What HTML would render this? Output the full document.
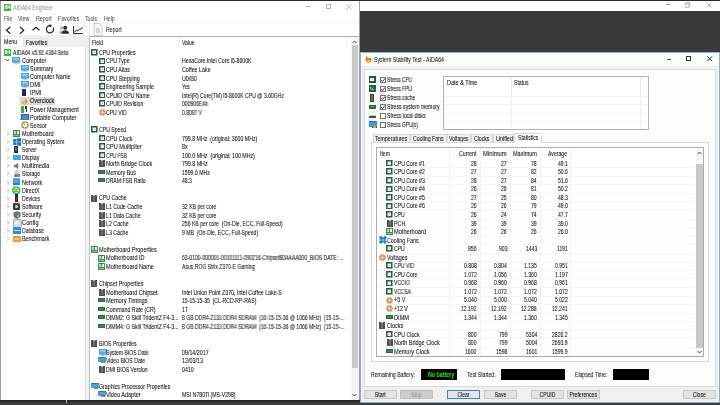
<!DOCTYPE html><html><head><meta charset="utf-8"><style>
*{margin:0;padding:0}
html,body{width:720px;height:405px;overflow:hidden;background:#2e2e2e;font-family:"Liberation Sans",sans-serif;position:relative}
.t{position:absolute;white-space:nowrap;line-height:8px;height:8px;transform:scaleY(1.3);transform-origin:0 3.4px;will-change:transform;-webkit-text-stroke:0.06px currentColor}
</style></head><body>
<div style="position:absolute;left:0px;top:0px;width:720px;height:1px;background:#2a2a2a"></div>
<div style="position:absolute;left:0px;top:400px;width:720px;height:5px;background:#3a3a3a"></div>
<div style="position:absolute;left:0px;top:400px;width:720px;height:1.5px;background:#262626"></div>
<div style="position:absolute;left:65.5px;top:400px;width:1.6px;height:3px;background:#bdbdbd"></div>
<div style="position:absolute;left:0px;top:1px;width:360px;height:399px;background:#fff"></div>
<div style="position:absolute;left:0px;top:1px;width:1px;height:399px;background:#9c9c9c"></div>
<div style="position:absolute;left:359px;top:1px;width:1px;height:399px;background:#9a9a9a"></div>
<div style="position:absolute;left:4px;top:4px;width:7px;height:7px;background:#3cb83c"></div><div style="position:absolute;left:4px;top:4px;width:7px;height:7px;color:#fff;font-size:5.6px;font-weight:bold;line-height:7.4px;text-align:center;letter-spacing:-0.3px">64</div>
<div class="t" style="left:13px;top:3.10px;color:#9a9a9a;font-size:5.2px;">AIDA64 Engineer</div>
<div style="position:absolute;left:306px;top:6.4px;width:4.8px;height:0.7px;background:#b4b4b4"></div>
<div style="position:absolute;left:326px;top:4px;width:5px;height:5px;box-sizing:border-box;border:0.8px solid #b4b4b4"></div>
<svg style="position:absolute;left:346px;top:4px" width="6" height="6" viewBox="0 0 6 6"><path d="M0.3 0.3L5.7 5.7M5.7 0.3L0.3 5.7" stroke="#b4b4b4" stroke-width="0.8"/></svg>
<div class="t" style="left:4px;top:13.80px;color:#555;font-size:5.2px;">File</div>
<div class="t" style="left:18px;top:13.80px;color:#555;font-size:5.2px;">View</div>
<div class="t" style="left:36px;top:13.80px;color:#555;font-size:5.2px;">Report</div>
<div class="t" style="left:58px;top:13.80px;color:#555;font-size:5.2px;">Favorites</div>
<div class="t" style="left:85px;top:13.80px;color:#555;font-size:5.2px;">Tools</div>
<div class="t" style="left:104px;top:13.80px;color:#555;font-size:5.2px;">Help</div>
<div style="position:absolute;left:1px;top:22.5px;width:358px;height:0.5px;background:#f6f6f6"></div>
<svg style="position:absolute;left:0;top:22px" width="90" height="14" viewBox="0 0 90 14">
<path d="M10.3 5L6.5 8.3L10.3 11.7" fill="none" stroke="#222" stroke-width="1.2"/>
<path d="M20 5L23.8 8.3L20 11.7" fill="none" stroke="#222" stroke-width="1.2"/>
<path d="M32.5 8.3L36 5.2L39.5 8.3" fill="none" stroke="#222" stroke-width="1.2"/>
<path d="M53.1 5.5A3.6 3.6 0 1 1 50 3.7" fill="none" stroke="#222" stroke-width="1.15"/>
<path d="M49.6 2L52.2 3.7L49.6 5.4Z" fill="#222"/>
<circle cx="61.6" cy="5.9" r="1.6" fill="#b5b5b5"/>
<path d="M58.8 11.6Q59.2 8.6 62.5 8.3L61.5 11.6Z" fill="#b5b5b5"/>
<circle cx="65.2" cy="5.7" r="2" fill="#2a2a2a"/>
<path d="M61.3 11.7Q61.6 8.4 65.2 8.2Q68.8 8.4 69.1 11.7Z" fill="#2a2a2a"/>
<path d="M73.6 4.2V11.6H82.9" fill="none" stroke="#222" stroke-width="1"/>
<path d="M74.6 10.2L76.4 7.9L78 9.1L79.8 6.8L80.8 7.3L82.4 5" fill="none" stroke="#222" stroke-width="0.95"/>
</svg>
<div style="position:absolute;left:89px;top:22px;width:0.7px;height:13px;background:#e2e2e2"></div>
<svg style="position:absolute;left:93px;top:23px" width="10" height="13" viewBox="0 0 10 13"><path d="M1 0.5H6.5L9 3V12.5H1Z" fill="#f7f7f7" stroke="#b8b8b8" stroke-width="0.7"/><rect x="3" y="5" width="4" height="5" fill="#d4d4d4"/></svg>
<div class="t" style="left:106px;top:25.30px;color:#2a2a2a;font-size:5.2px;">Report</div>
<div style="position:absolute;left:1px;top:35.3px;width:88px;height:11.7px;background:#f0f0f0"></div>
<div style="position:absolute;left:1px;top:37px;width:22px;height:10.5px;background:#fff"></div>
<div class="t" style="left:4px;top:36.80px;color:#111;font-size:5.3px;">Menu</div>
<div style="position:absolute;left:23px;top:37.8px;width:25px;height:9.2px;background:#ececec;box-sizing:border-box;border:0.6px solid #e2e2e2;border-bottom:none"></div>
<div class="t" style="left:25.5px;top:37.80px;color:#111;font-size:5.2px;">Favorites</div>
<div style="position:absolute;left:1px;top:47px;width:85px;height:353px;background:#fff"></div>
<div style="position:absolute;left:85.4px;top:47px;width:0.6px;height:353px;background:#e4e4e4"></div>
<div style="position:absolute;left:86px;top:36px;width:3px;height:364px;background:#f0f0f0"></div>
<div style="position:absolute;left:89px;top:36px;width:270px;height:364px;background:#fff"></div>
<div style="position:absolute;left:88.6px;top:36px;width:0.8px;height:364px;background:#c0c0c0"></div>
<div style="position:absolute;left:89px;top:35.8px;width:270px;height:0.8px;background:#b0b0b0"></div>
<div style="position:absolute;left:3.6px;top:48.70px;width:7.4px;height:7.2px;background:#36b936"></div><div style="position:absolute;left:3.6px;top:48.70px;width:7.4px;height:7.2px;color:#fff;font-size:5.6px;font-weight:bold;line-height:7.6px;text-align:center;letter-spacing:-0.3px">64</div>
<div class="t" style="left:13px;top:47.80px;color:#141414;font-size:5.1px;transform:scale(0.9870,1.3);">AIDA64 v5.92.4364 Beta</div>
<svg style="position:absolute;left:5px;top:58.41px" width="5" height="4" viewBox="0 0 5 4"><path d="M0.5 1L2.5 3L4.5 1" fill="none" stroke="#333" stroke-width="0.9"/></svg>
<svg style="position:absolute;left:12.00px;top:57.01px" width="8" height="7.5" viewBox="0 0 8 7.5"><rect x="0.3" y="0.3" width="7.4" height="4.9" fill="#56b2ee" stroke="#2c84c6" stroke-width="0.6"/><rect x="1" y="1" width="6" height="1.6" fill="#8fd0f7"/><rect x="3.2" y="5.3" width="1.6" height="1" fill="#7a8a99"/><rect x="1.5" y="6.3" width="5" height="0.9" fill="#b9c6d2"/></svg>
<div class="t" style="left:22px;top:55.91px;color:#141414;font-size:5.1px;transform:scale(1.0883,1.3);">Computer</div>
<div style="position:absolute;left:20px;top:96.96px;width:35px;height:8px;background:#d9d9d9"></div>
<svg style="position:absolute;left:20.50px;top:65.12px" width="8" height="7.5" viewBox="0 0 8 7.5"><rect x="0.3" y="0.3" width="7.4" height="4.9" fill="#56b2ee" stroke="#2c84c6" stroke-width="0.6"/><rect x="1" y="1" width="6" height="1.6" fill="#8fd0f7"/><rect x="3.2" y="5.3" width="1.6" height="1" fill="#7a8a99"/><rect x="1.5" y="6.3" width="5" height="0.9" fill="#b9c6d2"/></svg>
<div class="t" style="left:30px;top:64.02px;color:#141414;font-size:5.1px;transform:scale(1.0713,1.3);">Summary</div>
<svg style="position:absolute;left:20.50px;top:73.23px" width="8" height="7.5" viewBox="0 0 8 7.5"><rect x="0.3" y="0.3" width="7.4" height="4.9" fill="#56b2ee" stroke="#2c84c6" stroke-width="0.6"/><rect x="1" y="1" width="6" height="1.6" fill="#8fd0f7"/><rect x="3.2" y="5.3" width="1.6" height="1" fill="#7a8a99"/><rect x="1.5" y="6.3" width="5" height="0.9" fill="#b9c6d2"/></svg>
<div class="t" style="left:30px;top:72.13px;color:#141414;font-size:5.1px;transform:scale(1.0863,1.3);">Computer Name</div>
<svg style="position:absolute;left:20.50px;top:81.34px" width="8" height="7.5" viewBox="0 0 8 7.5"><rect x="0.3" y="0.3" width="7.4" height="4.9" fill="#56b2ee" stroke="#2c84c6" stroke-width="0.6"/><rect x="1" y="1" width="6" height="1.6" fill="#8fd0f7"/><rect x="3.2" y="5.3" width="1.6" height="1" fill="#7a8a99"/><rect x="1.5" y="6.3" width="5" height="0.9" fill="#b9c6d2"/></svg>
<div class="t" style="left:30px;top:80.24px;color:#141414;font-size:5.1px;transform:scale(1.1344,1.3);">DMI</div>
<div style="position:absolute;left:22px;top:89.35px;width:3.5px;height:7px;background:#1d2a44;border-radius:0.6px"></div>
<div class="t" style="left:30px;top:88.35px;color:#141414;font-size:5.1px;transform:scale(1.0826,1.3);">IPMI</div>
<svg style="position:absolute;left:21px;top:96.96px" width="7" height="8" viewBox="0 0 7 8"><path d="M1 3L3 5.5L4.5 1.5L6.5 4.5L5 7.5H2Z" fill="#f28c1e"/><path d="M2.6 6.2L4.4 4.2L5 7.2Z" fill="#ffd24a"/></svg>
<div class="t" style="left:30px;top:96.46px;color:#141414;font-size:5.1px;transform:scale(1.0748,1.3);">Overclock</div>
<div style="position:absolute;left:20.5px;top:105.57px;width:3px;height:7px;background:#2fb34a"></div>
<div style="position:absolute;left:25px;top:105.86999999999999px;width:2px;height:3px;background:#333"></div>
<div style="position:absolute;left:25.7px;top:108.86999999999999px;width:0.7px;height:3px;background:#333"></div>
<div class="t" style="left:30px;top:104.57px;color:#141414;font-size:5.1px;transform:scale(1.0714,1.3);">Power Management</div>
<div style="position:absolute;left:21px;top:113.67999999999999px;width:6px;height:4.5px;background:#3f8fdd;border:0.5px solid #2a5f9a"></div>
<div style="position:absolute;left:20px;top:118.67999999999999px;width:8px;height:1.5px;background:#6a7a90"></div>
<div class="t" style="left:30px;top:112.68px;color:#141414;font-size:5.1px;transform:scale(1.0838,1.3);">Portable Computer</div>
<svg style="position:absolute;left:20.5px;top:121.49px" width="8" height="8" viewBox="0 0 8 8"><circle cx="4" cy="4" r="3.1" fill="#fff" stroke="#c98b3a" stroke-width="1.3"/><path d="M4 4L2.5 2" stroke="#2f9a3a" stroke-width="0.9"/><path d="M1.2 4.6A3 3 0 0 0 2.6 6.6" stroke="#2fb14a" stroke-width="1.2" fill="none"/></svg>
<div class="t" style="left:30px;top:120.79px;color:#141414;font-size:5.1px;transform:scale(1.0285,1.3);">Sensor</div>
<svg style="position:absolute;left:5.5px;top:130.89999999999998px" width="4" height="5" viewBox="0 0 4 5"><path d="M1 0.5L3 2.5L1 4.5" fill="none" stroke="#8a8a8a" stroke-width="0.7"/></svg>
<div style="position:absolute;left:12.5px;top:129.89999999999998px;width:7.5px;height:7px;background:#3c8f4c"></div>
<div style="position:absolute;left:13.5px;top:130.89999999999998px;width:2.4px;height:2.8px;background:#b8dcbf"></div>
<div style="position:absolute;left:16.6px;top:130.89999999999998px;width:2.4px;height:2.8px;background:#f4fbf5"></div>
<div style="position:absolute;left:13.5px;top:134.59999999999997px;width:5.5px;height:1.3px;background:#7fbf8a"></div>
<div class="t" style="left:22px;top:128.90px;color:#141414;font-size:5.1px;transform:scale(1.0938,1.3);">Motherboard</div>
<svg style="position:absolute;left:5.5px;top:139.01px" width="4" height="5" viewBox="0 0 4 5"><path d="M1 0.5L3 2.5L1 4.5" fill="none" stroke="#8a8a8a" stroke-width="0.7"/></svg>
<svg style="position:absolute;left:12.5px;top:137.91px" width="8" height="8" viewBox="0 0 8 8"><path d="M0 1.2L3.5 0.7V3.7H0ZM4 0.6L8 0V3.7H4ZM0 4.2H3.5V7.3L0 6.8ZM4 4.2H8V8L4 7.4Z" fill="#1577d6"/></svg>
<div class="t" style="left:22px;top:137.01px;color:#141414;font-size:5.1px;transform:scale(1.0385,1.3);">Operating System</div>
<svg style="position:absolute;left:5.5px;top:147.12px" width="4" height="5" viewBox="0 0 4 5"><path d="M1 0.5L3 2.5L1 4.5" fill="none" stroke="#8a8a8a" stroke-width="0.7"/></svg>
<div style="position:absolute;left:14.0px;top:145.82px;width:4px;height:7.6px;background:#1f2a3a;border-radius:0.5px"></div>
<div style="position:absolute;left:14.8px;top:146.82px;width:2.4px;height:4.5px;background:#4b6ea8"></div>
<div class="t" style="left:22px;top:145.12px;color:#141414;font-size:5.1px;transform:scale(0.9723,1.3);">Server</div>
<svg style="position:absolute;left:5.5px;top:155.23px" width="4" height="5" viewBox="0 0 4 5"><path d="M1 0.5L3 2.5L1 4.5" fill="none" stroke="#8a8a8a" stroke-width="0.7"/></svg>
<div style="position:absolute;left:12.5px;top:154.73px;width:8px;height:5.5px;background:#48a5ea"></div>
<div class="t" style="left:22px;top:153.23px;color:#141414;font-size:5.1px;transform:scale(1.0387,1.3);">Display</div>
<svg style="position:absolute;left:5.5px;top:163.33999999999997px" width="4" height="5" viewBox="0 0 4 5"><path d="M1 0.5L3 2.5L1 4.5" fill="none" stroke="#8a8a8a" stroke-width="0.7"/></svg>
<svg style="position:absolute;left:12.5px;top:161.83999999999997px" width="8" height="8" viewBox="0 0 8 8"><path d="M1 2.8H2.8L5 0.8V7.2L2.8 5.2H1Z" fill="#777"/><path d="M6 2.5V5.5" stroke="#aaa" stroke-width="0.7"/></svg>
<div class="t" style="left:22px;top:161.34px;color:#141414;font-size:5.1px;transform:scale(1.1100,1.3);">Multimedia</div>
<svg style="position:absolute;left:5.5px;top:171.45px" width="4" height="5" viewBox="0 0 4 5"><path d="M1 0.5L3 2.5L1 4.5" fill="none" stroke="#8a8a8a" stroke-width="0.7"/></svg>
<div style="position:absolute;left:13.5px;top:174.45px;width:6.5px;height:3px;background:#888;border-radius:0.5px"></div>
<div style="position:absolute;left:15.0px;top:170.45px;width:3.5px;height:4px;background:#cfcfcf;border-radius:50% 50% 0 0"></div>
<div class="t" style="left:22px;top:169.45px;color:#141414;font-size:5.1px;transform:scale(1.0144,1.3);">Storage</div>
<svg style="position:absolute;left:5.5px;top:179.56px" width="4" height="5" viewBox="0 0 4 5"><path d="M1 0.5L3 2.5L1 4.5" fill="none" stroke="#8a8a8a" stroke-width="0.7"/></svg>
<div style="position:absolute;left:13.0px;top:178.26px;width:7px;height:7.2px;background:#4aa3ea;border-radius:1px"></div>
<div style="position:absolute;left:13.0px;top:183.46px;width:7px;height:2px;background:#2e7fc8"></div>
<div class="t" style="left:22px;top:177.56px;color:#141414;font-size:5.1px;transform:scale(1.0890,1.3);">Network</div>
<svg style="position:absolute;left:5.5px;top:187.67000000000002px" width="4" height="5" viewBox="0 0 4 5"><path d="M1 0.5L3 2.5L1 4.5" fill="none" stroke="#8a8a8a" stroke-width="0.7"/></svg>
<svg style="position:absolute;left:12.0px;top:186.17000000000002px" width="8.5" height="8.5" viewBox="0 0 8.5 8.5"><circle cx="4.25" cy="4.25" r="3.4" fill="#fff" stroke="#2fb32f" stroke-width="1.4"/><path d="M2.3 2.6Q4.25 4.5 6.2 2.6M2.3 6.2Q4.25 4 6.2 6.2" fill="none" stroke="#2fb32f" stroke-width="1.1"/></svg>
<div class="t" style="left:22px;top:185.67px;color:#141414;font-size:5.1px;transform:scale(1.0537,1.3);">DirectX</div>
<svg style="position:absolute;left:5.5px;top:195.77999999999997px" width="4" height="5" viewBox="0 0 4 5"><path d="M1 0.5L3 2.5L1 4.5" fill="none" stroke="#8a8a8a" stroke-width="0.7"/></svg>
<div style="position:absolute;left:14.8px;top:194.47999999999996px;width:3px;height:7.6px;background:#2a2a2a"></div>
<div style="position:absolute;left:15.5px;top:197.77999999999997px;width:1.5px;height:1.5px;background:#3a9a4a"></div>
<div class="t" style="left:22px;top:193.78px;color:#141414;font-size:5.1px;transform:scale(0.9986,1.3);">Devices</div>
<svg style="position:absolute;left:5.5px;top:203.89px" width="4" height="5" viewBox="0 0 4 5"><path d="M1 0.5L3 2.5L1 4.5" fill="none" stroke="#8a8a8a" stroke-width="0.7"/></svg>
<div style="position:absolute;left:13.0px;top:203.39px;width:7px;height:6.5px;background:#3a3a3a;border-radius:1px"></div>
<div style="position:absolute;left:15.0px;top:205.39px;width:3px;height:3px;background:#ddd;border-radius:50%"></div>
<div style="position:absolute;left:17.5px;top:202.39px;width:2.5px;height:2px;background:#e8a23a"></div>
<div class="t" style="left:22px;top:201.89px;color:#141414;font-size:5.1px;transform:scale(1.0244,1.3);">Software</div>
<svg style="position:absolute;left:5.5px;top:212.0px" width="4" height="5" viewBox="0 0 4 5"><path d="M1 0.5L3 2.5L1 4.5" fill="none" stroke="#8a8a8a" stroke-width="0.7"/></svg>
<svg style="position:absolute;left:12.5px;top:210.5px" width="8" height="8" viewBox="0 0 8 8"><path d="M4 0.3L7.5 1.4V4.2Q7.3 6.7 4 7.8Q0.7 6.7 0.5 4.2V1.4Z" fill="#2c5fb8"/><path d="M1.2 1.9L3.9 1.2V4H1.2Z" fill="#e54a2a"/><path d="M4.1 1.2L6.8 1.9V4H4.1Z" fill="#3fae3a"/><path d="M1.3 4.2H3.9V6.8Q1.9 6.2 1.3 4.2Z" fill="#2c8ae0"/><path d="M4.1 4.2H6.7Q6.1 6.2 4.1 6.8Z" fill="#f2c21a"/></svg>
<div class="t" style="left:22px;top:210.00px;color:#141414;font-size:5.1px;transform:scale(1.0377,1.3);">Security</div>
<svg style="position:absolute;left:5.5px;top:220.11px" width="4" height="5" viewBox="0 0 4 5"><path d="M1 0.5L3 2.5L1 4.5" fill="none" stroke="#8a8a8a" stroke-width="0.7"/></svg>
<div style="position:absolute;left:13.0px;top:219.31px;width:7px;height:6.3px;background:#d8dde2;border:0.5px solid #aab2ba;border-radius:1px"></div>
<div style="position:absolute;left:14.5px;top:221.11px;width:4px;height:3px;background:#f2f4f6"></div>
<div class="t" style="left:22px;top:218.11px;color:#141414;font-size:5.1px;transform:scale(1.1266,1.3);">Config</div>
<svg style="position:absolute;left:5.5px;top:228.21999999999997px" width="4" height="5" viewBox="0 0 4 5"><path d="M1 0.5L3 2.5L1 4.5" fill="none" stroke="#8a8a8a" stroke-width="0.7"/></svg>
<div style="position:absolute;left:13.0px;top:227.41999999999996px;width:7.5px;height:6.3px;background:#2a8ee0;border-radius:0.5px"></div>
<div style="position:absolute;left:14.0px;top:230.21999999999997px;width:5.5px;height:0.8px;background:#bfe0fa"></div>
<div class="t" style="left:22px;top:226.22px;color:#141414;font-size:5.1px;transform:scale(1.0017,1.3);">Database</div>
<svg style="position:absolute;left:5.5px;top:236.32999999999998px" width="4" height="5" viewBox="0 0 4 5"><path d="M1 0.5L3 2.5L1 4.5" fill="none" stroke="#8a8a8a" stroke-width="0.7"/></svg>
<div style="position:absolute;left:13.0px;top:235.82999999999998px;width:7.5px;height:6px;background:#f39a2a;border-radius:0.5px"></div>
<div style="position:absolute;left:14.5px;top:237.52999999999997px;width:4.5px;height:2.6px;background:#fbd29a"></div>
<div class="t" style="left:22px;top:234.33px;color:#141414;font-size:5.1px;transform:scale(1.0615,1.3);">Benchmark</div>
<div class="t" style="left:92px;top:38.00px;color:#141414;font-size:5.1px;">Field</div>
<div class="t" style="left:182px;top:38.00px;color:#141414;font-size:5.1px;">Value</div>
<div style="position:absolute;left:178.3px;top:37px;width:0.6px;height:10.5px;background:#ececec"></div>
<div style="position:absolute;left:346.3px;top:37px;width:0.6px;height:10.5px;background:#ececec"></div>
<svg style="position:absolute;left:91.00px;top:49.10px" width="6.5" height="6.5" viewBox="0 0 7 7"><rect x="0.8" y="0.8" width="5.4" height="5.4" fill="#f3f6f3" stroke="#28603e" stroke-width="1.7"/><rect x="2.7" y="2.7" width="1.6" height="1.6" fill="#cdd8cf"/></svg>
<div class="t" style="left:98.5px;top:47.90px;color:#141414;font-size:5.1px;transform:scale(1.0342,1.3);">CPU Properties</div>
<svg style="position:absolute;left:98.50px;top:57.66px" width="6.5" height="6.5" viewBox="0 0 7 7"><rect x="0.8" y="0.8" width="5.4" height="5.4" fill="#f3f6f3" stroke="#28603e" stroke-width="1.7"/><rect x="2.7" y="2.7" width="1.6" height="1.6" fill="#cdd8cf"/></svg>
<div class="t" style="left:106.0px;top:56.46px;color:#141414;font-size:5.1px;transform:scale(1.0205,1.3);">CPU Type</div>
<div class="t" style="left:182px;top:56.46px;color:#141414;font-size:5.1px;transform:scale(1.0198,1.3);">HexaCore Intel Core i5-8600K</div>
<svg style="position:absolute;left:98.50px;top:66.22px" width="6.5" height="6.5" viewBox="0 0 7 7"><rect x="0.8" y="0.8" width="5.4" height="5.4" fill="#f3f6f3" stroke="#28603e" stroke-width="1.7"/><rect x="2.7" y="2.7" width="1.6" height="1.6" fill="#cdd8cf"/></svg>
<div class="t" style="left:106.0px;top:65.02px;color:#141414;font-size:5.1px;transform:scale(1.0398,1.3);">CPU Alias</div>
<div class="t" style="left:182px;top:65.02px;color:#141414;font-size:5.1px;transform:scale(1.0442,1.3);">Coffee Lake</div>
<svg style="position:absolute;left:98.50px;top:74.78px" width="6.5" height="6.5" viewBox="0 0 7 7"><rect x="0.8" y="0.8" width="5.4" height="5.4" fill="#f3f6f3" stroke="#28603e" stroke-width="1.7"/><rect x="2.7" y="2.7" width="1.6" height="1.6" fill="#cdd8cf"/></svg>
<div class="t" style="left:106.0px;top:73.58px;color:#141414;font-size:5.1px;transform:scale(1.0409,1.3);">CPU Stepping</div>
<div class="t" style="left:182px;top:73.58px;color:#141414;font-size:5.1px;transform:scale(1.0479,1.3);">U0/B0</div>
<svg style="position:absolute;left:98.50px;top:83.34px" width="6.5" height="6.5" viewBox="0 0 7 7"><rect x="0.8" y="0.8" width="5.4" height="5.4" fill="#f3f6f3" stroke="#28603e" stroke-width="1.7"/><rect x="2.7" y="2.7" width="1.6" height="1.6" fill="#cdd8cf"/></svg>
<div class="t" style="left:106.0px;top:82.14px;color:#141414;font-size:5.1px;transform:scale(1.0431,1.3);">Engineering Sample</div>
<div class="t" style="left:182px;top:82.14px;color:#141414;font-size:5.1px;transform:scale(0.9444,1.3);">Yes</div>
<svg style="position:absolute;left:98.50px;top:91.90px" width="6.5" height="6.5" viewBox="0 0 7 7"><rect x="0.8" y="0.8" width="5.4" height="5.4" fill="#f3f6f3" stroke="#28603e" stroke-width="1.7"/><rect x="2.7" y="2.7" width="1.6" height="1.6" fill="#cdd8cf"/></svg>
<div class="t" style="left:106.0px;top:90.70px;color:#141414;font-size:5.1px;transform:scale(1.0132,1.3);">CPUID CPU Name</div>
<div class="t" style="left:182px;top:90.70px;color:#141414;font-size:5.1px;transform:scale(0.9987,1.3);">Intel(R) Core(TM) i5-8600K CPU @ 3.60GHz</div>
<svg style="position:absolute;left:98.50px;top:100.46px" width="6.5" height="6.5" viewBox="0 0 7 7"><rect x="0.8" y="0.8" width="5.4" height="5.4" fill="#f3f6f3" stroke="#28603e" stroke-width="1.7"/><rect x="2.7" y="2.7" width="1.6" height="1.6" fill="#cdd8cf"/></svg>
<div class="t" style="left:106.0px;top:99.26px;color:#141414;font-size:5.1px;transform:scale(1.0146,1.3);">CPUID Revision</div>
<div class="t" style="left:182px;top:99.26px;color:#141414;font-size:5.1px;transform:scale(0.9797,1.3);">000906EAh</div>
<svg style="position:absolute;left:98.50px;top:109.02px" width="7" height="7" viewBox="0 0 7 7"><circle cx="3.5" cy="3.5" r="3" fill="#f08a3a" stroke="#c4a894" stroke-width="0.9"/><path d="M3.5 1.6V5.4M1.6 3.5H5.4" stroke="#fde0c8" stroke-width="0.9"/></svg>
<div class="t" style="left:106.0px;top:107.82px;color:#141414;font-size:5.1px;transform:scale(0.9965,1.3);">CPU VID</div>
<div class="t" style="left:182px;top:107.82px;color:#141414;font-size:5.1px;transform:scale(0.9727,1.3);">0.8087 V</div>
<svg style="position:absolute;left:91.00px;top:126.14px" width="6.5" height="6.5" viewBox="0 0 7 7"><rect x="0.8" y="0.8" width="5.4" height="5.4" fill="#f3f6f3" stroke="#28603e" stroke-width="1.7"/><rect x="2.7" y="2.7" width="1.6" height="1.6" fill="#cdd8cf"/></svg>
<div class="t" style="left:98.5px;top:124.94px;color:#141414;font-size:5.1px;transform:scale(1.0072,1.3);">CPU Speed</div>
<svg style="position:absolute;left:98.50px;top:134.70px" width="6.5" height="6.5" viewBox="0 0 7 7"><rect x="0.8" y="0.8" width="5.4" height="5.4" fill="#f3f6f3" stroke="#28603e" stroke-width="1.7"/><rect x="2.7" y="2.7" width="1.6" height="1.6" fill="#cdd8cf"/></svg>
<div class="t" style="left:106.0px;top:133.50px;color:#141414;font-size:5.1px;transform:scale(1.0573,1.3);">CPU Clock</div>
<div class="t" style="left:182px;top:133.50px;color:#141414;font-size:5.1px;transform:scale(1.0276,1.3);">799.8 MHz&nbsp; (original: 3600 MHz)</div>
<svg style="position:absolute;left:98.50px;top:143.26px" width="6.5" height="6.5" viewBox="0 0 7 7"><rect x="0.8" y="0.8" width="5.4" height="5.4" fill="#f3f6f3" stroke="#28603e" stroke-width="1.7"/><rect x="2.7" y="2.7" width="1.6" height="1.6" fill="#cdd8cf"/></svg>
<div class="t" style="left:106.0px;top:142.06px;color:#141414;font-size:5.1px;transform:scale(1.0933,1.3);">CPU Multiplier</div>
<div class="t" style="left:182px;top:142.06px;color:#141414;font-size:5.1px;transform:scale(1.0388,1.3);">8x</div>
<svg style="position:absolute;left:98.50px;top:151.82px" width="6.5" height="6.5" viewBox="0 0 7 7"><rect x="0.8" y="0.8" width="5.4" height="5.4" fill="#f3f6f3" stroke="#28603e" stroke-width="1.7"/><rect x="2.7" y="2.7" width="1.6" height="1.6" fill="#cdd8cf"/></svg>
<div class="t" style="left:106.0px;top:150.62px;color:#141414;font-size:5.1px;transform:scale(0.9444,1.3);">CPU FSB</div>
<div class="t" style="left:182px;top:150.62px;color:#141414;font-size:5.1px;transform:scale(1.0333,1.3);">100.0 MHz&nbsp; (original: 100 MHz)</div>
<div style="position:absolute;left:99px;top:160px;width:6px;height:7px;background:#505050"></div>
<div style="position:absolute;left:101px;top:161px;width:2px;height:5px;background:#6e6e6e"></div>
<div style="position:absolute;left:101px;top:160px;width:2px;height:1px;background:#bdbdbd"></div>
<div class="t" style="left:106.0px;top:159.18px;color:#141414;font-size:5.1px;transform:scale(1.0842,1.3);">North Bridge Clock</div>
<div class="t" style="left:182px;top:159.18px;color:#141414;font-size:5.1px;transform:scale(1.0389,1.3);">799.8 MHz</div>
<div style="position:absolute;left:98px;top:170px;width:7px;height:4px;background:#2a6a3e"></div>
<div style="position:absolute;left:99px;top:171px;width:5px;height:2px;background:#3f7f52"></div>
<div class="t" style="left:106.0px;top:167.74px;color:#141414;font-size:5.1px;transform:scale(1.0439,1.3);">Memory Bus</div>
<div class="t" style="left:182px;top:167.74px;color:#141414;font-size:5.1px;transform:scale(1.0139,1.3);">1599.6 MHz</div>
<div style="position:absolute;left:98px;top:178px;width:7px;height:4px;background:#2a6a3e"></div>
<div style="position:absolute;left:99px;top:179px;width:5px;height:2px;background:#3f7f52"></div>
<div class="t" style="left:106.0px;top:176.30px;color:#141414;font-size:5.1px;transform:scale(0.9990,1.3);">DRAM:FSB Ratio</div>
<div class="t" style="left:182px;top:176.30px;color:#141414;font-size:5.1px;transform:scale(0.9928,1.3);">48:3</div>
<div style="position:absolute;left:91px;top:195px;width:6px;height:7px;background:#505050"></div>
<div style="position:absolute;left:93px;top:196px;width:2px;height:5px;background:#6e6e6e"></div>
<div style="position:absolute;left:93px;top:195px;width:2px;height:1px;background:#bdbdbd"></div>
<div class="t" style="left:98.5px;top:193.42px;color:#141414;font-size:5.1px;transform:scale(1.0258,1.3);">CPU Cache</div>
<div style="position:absolute;left:99px;top:203px;width:6px;height:7px;background:#505050"></div>
<div style="position:absolute;left:101px;top:204px;width:2px;height:5px;background:#6e6e6e"></div>
<div style="position:absolute;left:101px;top:203px;width:2px;height:1px;background:#bdbdbd"></div>
<div class="t" style="left:106.0px;top:201.98px;color:#141414;font-size:5.1px;transform:scale(1.0267,1.3);">L1 Code Cache</div>
<div class="t" style="left:182px;top:201.98px;color:#141414;font-size:5.1px;transform:scale(1.0108,1.3);">32 KB per core</div>
<div style="position:absolute;left:99px;top:212px;width:6px;height:7px;background:#505050"></div>
<div style="position:absolute;left:101px;top:213px;width:2px;height:5px;background:#6e6e6e"></div>
<div style="position:absolute;left:101px;top:212px;width:2px;height:1px;background:#bdbdbd"></div>
<div class="t" style="left:106.0px;top:210.54px;color:#141414;font-size:5.1px;transform:scale(1.0181,1.3);">L1 Data Cache</div>
<div class="t" style="left:182px;top:210.54px;color:#141414;font-size:5.1px;transform:scale(1.0108,1.3);">32 KB per core</div>
<div style="position:absolute;left:99px;top:220px;width:6px;height:7px;background:#505050"></div>
<div style="position:absolute;left:101px;top:221px;width:2px;height:5px;background:#6e6e6e"></div>
<div style="position:absolute;left:101px;top:220px;width:2px;height:1px;background:#bdbdbd"></div>
<div class="t" style="left:106.0px;top:219.10px;color:#141414;font-size:5.1px;transform:scale(1.0361,1.3);">L2 Cache</div>
<div class="t" style="left:182px;top:219.10px;color:#141414;font-size:5.1px;transform:scale(1.0038,1.3);">256 KB per core&nbsp; (On-Die, ECC, Full-Speed)</div>
<div style="position:absolute;left:99px;top:229px;width:6px;height:7px;background:#505050"></div>
<div style="position:absolute;left:101px;top:230px;width:2px;height:5px;background:#6e6e6e"></div>
<div style="position:absolute;left:101px;top:229px;width:2px;height:1px;background:#bdbdbd"></div>
<div class="t" style="left:106.0px;top:227.66px;color:#141414;font-size:5.1px;transform:scale(1.0246,1.3);">L3 Cache</div>
<div class="t" style="left:182px;top:227.66px;color:#141414;font-size:5.1px;transform:scale(1.0107,1.3);">9 MB&nbsp; (On-Die, ECC, Full-Speed)</div>
<div style="position:absolute;left:91px;top:246px;width:7px;height:7px;background:#3c8f4c"></div>
<div style="position:absolute;left:92px;top:247px;width:2px;height:3px;background:#b8dcbf"></div>
<div style="position:absolute;left:95px;top:247px;width:2px;height:3px;background:#f4fbf5"></div>
<div style="position:absolute;left:92px;top:251px;width:5px;height:1px;background:#8fc79a"></div>
<div class="t" style="left:98.5px;top:244.78px;color:#141414;font-size:5.1px;transform:scale(1.0810,1.3);">Motherboard Properties</div>
<div style="position:absolute;left:98px;top:255px;width:7px;height:7px;background:#3c8f4c"></div>
<div style="position:absolute;left:99px;top:256px;width:2px;height:3px;background:#b8dcbf"></div>
<div style="position:absolute;left:102px;top:256px;width:2px;height:3px;background:#f4fbf5"></div>
<div style="position:absolute;left:99px;top:260px;width:5px;height:1px;background:#8fc79a"></div>
<div class="t" style="left:106.0px;top:253.34px;color:#141414;font-size:5.1px;transform:scale(1.0907,1.3);">Motherboard ID</div>
<div class="t" style="left:182px;top:253.34px;color:#141414;font-size:5.1px;transform:scale(0.9930,1.3);">63-0100-000001-00101111-090216-Chipset$0AAAA000_BIOS DATE: ...</div>
<div style="position:absolute;left:98px;top:263px;width:7px;height:7px;background:#3c8f4c"></div>
<div style="position:absolute;left:99px;top:264px;width:2px;height:3px;background:#b8dcbf"></div>
<div style="position:absolute;left:102px;top:264px;width:2px;height:3px;background:#f4fbf5"></div>
<div style="position:absolute;left:99px;top:268px;width:5px;height:1px;background:#8fc79a"></div>
<div class="t" style="left:106.0px;top:261.90px;color:#141414;font-size:5.1px;transform:scale(1.0902,1.3);">Motherboard Name</div>
<div class="t" style="left:182px;top:261.90px;color:#141414;font-size:5.1px;transform:scale(0.9935,1.3);">Asus ROG Strix Z370-E Gaming</div>
<div style="position:absolute;left:91px;top:280px;width:6px;height:7px;background:#505050"></div>
<div style="position:absolute;left:93px;top:281px;width:2px;height:5px;background:#6e6e6e"></div>
<div style="position:absolute;left:93px;top:280px;width:2px;height:1px;background:#bdbdbd"></div>
<div class="t" style="left:98.5px;top:279.02px;color:#141414;font-size:5.1px;transform:scale(1.0583,1.3);">Chipset Properties</div>
<div style="position:absolute;left:99px;top:289px;width:6px;height:7px;background:#505050"></div>
<div style="position:absolute;left:101px;top:290px;width:2px;height:5px;background:#6e6e6e"></div>
<div style="position:absolute;left:101px;top:289px;width:2px;height:1px;background:#bdbdbd"></div>
<div class="t" style="left:106.0px;top:287.58px;color:#141414;font-size:5.1px;transform:scale(1.0845,1.3);">Motherboard Chipset</div>
<div class="t" style="left:182px;top:287.58px;color:#141414;font-size:5.1px;transform:scale(1.0320,1.3);">Intel Union Point Z370, Intel Coffee Lake-S</div>
<div style="position:absolute;left:98px;top:298px;width:7px;height:4px;background:#2a6a3e"></div>
<div style="position:absolute;left:99px;top:299px;width:5px;height:2px;background:#3f7f52"></div>
<div class="t" style="left:106.0px;top:296.14px;color:#141414;font-size:5.1px;transform:scale(1.1130,1.3);">Memory Timings</div>
<div class="t" style="left:182px;top:296.14px;color:#141414;font-size:5.1px;transform:scale(1.0024,1.3);">15-15-15-35&nbsp; (CL-RCD-RP-RAS)</div>
<div style="position:absolute;left:98px;top:307px;width:7px;height:4px;background:#2a6a3e"></div>
<div style="position:absolute;left:99px;top:308px;width:5px;height:2px;background:#3f7f52"></div>
<div class="t" style="left:106.0px;top:304.70px;color:#141414;font-size:5.1px;transform:scale(1.0367,1.3);">Command Rate (CR)</div>
<div class="t" style="left:182px;top:304.70px;color:#141414;font-size:5.1px;transform:scale(1.0247,1.3);">1T</div>
<div style="position:absolute;left:98px;top:315px;width:7px;height:4px;background:#2a6a3e"></div>
<div style="position:absolute;left:99px;top:316px;width:5px;height:2px;background:#3f7f52"></div>
<div class="t" style="left:106.0px;top:313.26px;color:#141414;font-size:5.1px;transform:scale(1.0341,1.3);">DIMM2: G Skill TridentZ F4-3...</div>
<div class="t" style="left:182px;top:313.26px;color:#141414;font-size:5.1px;transform:scale(0.9917,1.3);">8 GB DDR4-2133 DDR4 SDRAM&nbsp; (16-15-15-36 @ 1066 MHz)&nbsp; (15-15-...</div>
<div style="position:absolute;left:98px;top:324px;width:7px;height:4px;background:#2a6a3e"></div>
<div style="position:absolute;left:99px;top:325px;width:5px;height:2px;background:#3f7f52"></div>
<div class="t" style="left:106.0px;top:321.82px;color:#141414;font-size:5.1px;transform:scale(1.0341,1.3);">DIMM4: G Skill TridentZ F4-3...</div>
<div class="t" style="left:182px;top:321.82px;color:#141414;font-size:5.1px;transform:scale(0.9917,1.3);">8 GB DDR4-2133 DDR4 SDRAM&nbsp; (16-15-15-36 @ 1066 MHz)&nbsp; (15-15-...</div>
<div style="position:absolute;left:91px;top:340px;width:6px;height:7px;background:#505050"></div>
<div style="position:absolute;left:93px;top:341px;width:2px;height:5px;background:#6e6e6e"></div>
<div style="position:absolute;left:93px;top:340px;width:2px;height:1px;background:#bdbdbd"></div>
<div class="t" style="left:98.5px;top:338.94px;color:#141414;font-size:5.1px;transform:scale(1.0214,1.3);">BIOS Properties</div>
<svg style="position:absolute;left:98.50px;top:348.50px" width="8" height="7.5" viewBox="0 0 8 7.5"><rect x="0.3" y="0.3" width="7.4" height="4.9" fill="#56b2ee" stroke="#2c84c6" stroke-width="0.6"/><rect x="1" y="1" width="6" height="1.6" fill="#8fd0f7"/><rect x="3.2" y="5.3" width="1.6" height="1" fill="#7a8a99"/><rect x="1.5" y="6.3" width="5" height="0.9" fill="#b9c6d2"/></svg>
<div class="t" style="left:106.0px;top:347.50px;color:#141414;font-size:5.1px;transform:scale(0.9965,1.3);">System BIOS Date</div>
<div class="t" style="left:182px;top:347.50px;color:#141414;font-size:5.1px;transform:scale(1.0431,1.3);">09/14/2017</div>
<div style="position:absolute;left:98px;top:357px;width:8px;height:5px;background:#47a3e8"></div>
<div style="position:absolute;left:98px;top:357px;width:8px;height:1px;background:#2a7bc0"></div>
<div style="position:absolute;left:101px;top:361px;width:4px;height:2px;background:#4f8f2a"></div>
<div style="position:absolute;left:102px;top:362px;width:2px;height:1px;background:#e0b020"></div>
<div class="t" style="left:106.0px;top:356.06px;color:#141414;font-size:5.1px;transform:scale(1.0103,1.3);">Video BIOS Date</div>
<div class="t" style="left:182px;top:356.06px;color:#141414;font-size:5.1px;transform:scale(1.0641,1.3);">12/03/13</div>
<div style="position:absolute;left:99px;top:366px;width:6px;height:7px;background:#505050"></div>
<div style="position:absolute;left:101px;top:367px;width:2px;height:5px;background:#6e6e6e"></div>
<div style="position:absolute;left:101px;top:366px;width:2px;height:1px;background:#bdbdbd"></div>
<div class="t" style="left:106.0px;top:364.62px;color:#141414;font-size:5.1px;transform:scale(1.0062,1.3);">DMI BIOS Version</div>
<div class="t" style="left:182px;top:364.62px;color:#141414;font-size:5.1px;transform:scale(1.0226,1.3);">0410</div>
<div style="position:absolute;left:91px;top:383px;width:8px;height:5px;background:#47a3e8"></div>
<div style="position:absolute;left:91px;top:383px;width:8px;height:1px;background:#2a7bc0"></div>
<div style="position:absolute;left:94px;top:387px;width:4px;height:2px;background:#4f8f2a"></div>
<div style="position:absolute;left:95px;top:388px;width:2px;height:1px;background:#e0b020"></div>
<div class="t" style="left:98.5px;top:381.74px;color:#141414;font-size:5.1px;transform:scale(1.0287,1.3);">Graphics Processor Properties</div>
<div style="position:absolute;left:98px;top:391px;width:8px;height:5px;background:#47a3e8"></div>
<div style="position:absolute;left:98px;top:391px;width:8px;height:1px;background:#2a7bc0"></div>
<div style="position:absolute;left:101px;top:395px;width:4px;height:2px;background:#4f8f2a"></div>
<div style="position:absolute;left:102px;top:396px;width:2px;height:1px;background:#e0b020"></div>
<div class="t" style="left:106.0px;top:390.30px;color:#141414;font-size:5.1px;transform:scale(1.0839,1.3);">Video Adapter</div>
<div class="t" style="left:182px;top:390.30px;color:#141414;font-size:5.1px;transform:scale(1.0161,1.3);">MSI N780Ti (MS-V298)</div>
<div style="position:absolute;left:351px;top:37px;width:7.5px;height:363px;background:#f4f4f4"></div>
<div style="position:absolute;left:351.8px;top:45px;width:6px;height:323px;background:#c9c9c9"></div>
<svg style="position:absolute;left:352px;top:39.5px" width="5" height="4" viewBox="0 0 5 4"><path d="M0.6 3L2.5 1L4.4 3" fill="none" stroke="#444" stroke-width="1"/></svg>
<svg style="position:absolute;left:352px;top:393px" width="5" height="4" viewBox="0 0 5 4"><path d="M0.6 1L2.5 3L4.4 1" fill="none" stroke="#444" stroke-width="1"/></svg>
<div style="position:absolute;left:358.6px;top:1px;width:1px;height:399px;background:#a0a0a0"></div>
<div style="position:absolute;left:360px;top:1px;width:360px;height:9.5px;background:#fff"></div>
<div style="position:absolute;left:360px;top:10.5px;width:360px;height:41.5px;background:#3a3a3a"></div>
<div style="position:absolute;left:666px;top:4.3px;width:4.5px;height:0.7px;background:#a8a8a8"></div>
<svg style="position:absolute;left:684px;top:2px" width="8" height="6" viewBox="0 0 8 6"><rect x="1.2" y="1.7" width="3.8" height="3.6" fill="none" stroke="#a8a8a8" stroke-width="0.8"/><path d="M2.2 1.7V0.7H6V4.3H5" fill="none" stroke="#a8a8a8" stroke-width="0.8"/></svg>
<svg style="position:absolute;left:706px;top:2px" width="6" height="6" viewBox="0 0 6 6"><path d="M0.5 0.5L5.5 5.5M5.5 0.5L0.5 5.5" stroke="#a8a8a8" stroke-width="0.8"/></svg>
<div style="position:absolute;left:360px;top:51.6px;width:359.6px;height:351px;box-sizing:border-box;background:#f0f0f0;border:1px solid #7fb2e0"></div>
<div style="position:absolute;left:361px;top:52.6px;width:357.6px;height:13.4px;background:#fff"></div>
<svg style="position:absolute;left:364.5px;top:54.8px" width="7" height="8" viewBox="0 0 7 8"><path d="M1.4 0.4Q2 2.2 3.2 3.2Q4.4 3.6 5.6 2.6Q6.9 3.8 6.5 5.4Q6 7.7 3.6 7.7Q0.8 7.6 0.6 5Q0.5 2.8 1.4 0.4Z" fill="#f47a16"/><path d="M3.7 7.3Q1.9 7 2 5.2Q2.8 5.8 3.6 4.6Q4.8 5.2 5.2 5.6Q5 7.2 3.7 7.3Z" fill="#ffc21c"/></svg>
<div class="t" style="left:373.5px;top:54.70px;color:#222;font-size:5.2px;">System Stability Test - AIDA64</div>
<div style="position:absolute;left:666.5px;top:58.6px;width:4.8px;height:0.6px;background:#444"></div>
<div style="position:absolute;left:686px;top:56.3px;width:5px;height:5px;box-sizing:border-box;border:0.8px solid #333"></div>
<svg style="position:absolute;left:707px;top:56px" width="5.5" height="5.5" viewBox="0 0 6 6"><path d="M0.4 0.4L5.6 5.6M5.6 0.4L0.4 5.6" stroke="#222" stroke-width="1.05"/></svg>
<div style="position:absolute;left:363.5px;top:69px;width:352px;height:317px;box-sizing:border-box;background:#fdfdfd;border:0.7px solid #dcdcdc;border-bottom:none"></div>
<div style="position:absolute;left:361px;top:385.5px;width:357.6px;height:0.8px;background:#dadada"></div>
<div style="position:absolute;left:368.6px;top:76.3px;width:7.1px;height:6.3px;background:#24593a"></div>
<div style="position:absolute;left:370.4px;top:78.1px;width:3.5px;height:2.7px;background:#eef3ef"></div>
<div style="position:absolute;left:371.5px;top:78.9px;width:1.3px;height:1.1px;background:#c5d3c8"></div>
<div style="position:absolute;left:379.6px;top:77.2px;width:6px;height:6px;box-sizing:border-box;background:#fff;border:0.8px solid #707070"></div>
<svg style="position:absolute;left:379.6px;top:77.2px" width="6" height="6" viewBox="0 0 6 6"><path d="M1.1 3L2.5 4.4L5 1.5" fill="none" stroke="#222" stroke-width="0.95"/></svg>
<div class="t" style="left:387px;top:75.00px;color:#141414;font-size:5.1px;transform:scale(0.9395,1.3);">Stress CPU</div>
<div style="position:absolute;left:368.6px;top:85.3px;width:7.1px;height:6.3px;background:#2a5f3a"></div>
<div style="position:absolute;left:369.9px;top:86.6px;width:4.5px;height:3.7px;background:#9fc2a8"></div>
<svg style="position:absolute;left:369.8px;top:86.4px" width="5" height="4.5" viewBox="0 0 5 4.5"><path d="M0.5 3.8L2 1.2L3.3 2.8L4.5 0.8" fill="none" stroke="#173a22" stroke-width="0.9"/></svg>
<div style="position:absolute;left:379.6px;top:86.2px;width:6px;height:6px;box-sizing:border-box;background:#fff;border:0.8px solid #707070"></div>
<svg style="position:absolute;left:379.6px;top:86.2px" width="6" height="6" viewBox="0 0 6 6"><path d="M1.1 3L2.5 4.4L5 1.5" fill="none" stroke="#222" stroke-width="0.95"/></svg>
<div class="t" style="left:387px;top:84.00px;color:#141414;font-size:5.1px;transform:scale(0.9598,1.3);">Stress FPU</div>
<div style="position:absolute;left:369.8px;top:94px;width:4.6px;height:7.8px;background:#3f3f3f"></div>
<div style="position:absolute;left:371.3px;top:94.7px;width:1.6px;height:6.4px;background:#6c6c6c"></div>
<div style="position:absolute;left:379.6px;top:95.2px;width:6px;height:6px;box-sizing:border-box;background:#fff;border:0.8px solid #707070"></div>
<svg style="position:absolute;left:379.6px;top:95.2px" width="6" height="6" viewBox="0 0 6 6"><path d="M1.1 3L2.5 4.4L5 1.5" fill="none" stroke="#222" stroke-width="0.95"/></svg>
<div class="t" style="left:387px;top:93.00px;color:#141414;font-size:5.1px;transform:scale(0.9608,1.3);">Stress cache</div>
<div style="position:absolute;left:368.8px;top:104.5px;width:7.4px;height:4px;background:#2a6a3e"></div>
<div style="position:absolute;left:369.9px;top:105.8px;width:5.2px;height:1.2px;background:#4e8f5e"></div>
<div style="position:absolute;left:379.6px;top:104.2px;width:6px;height:6px;box-sizing:border-box;background:#fff;border:0.8px solid #707070"></div>
<svg style="position:absolute;left:379.6px;top:104.2px" width="6" height="6" viewBox="0 0 6 6"><path d="M1.1 3L2.5 4.4L5 1.5" fill="none" stroke="#222" stroke-width="0.95"/></svg>
<div class="t" style="left:387px;top:102.00px;color:#141414;font-size:5.1px;transform:scale(1.0155,1.3);">Stress system memory</div>
<div style="position:absolute;left:369px;top:116.2px;width:7px;height:2.2px;background:#4a4a4a;border-radius:0.5px"></div>
<div style="position:absolute;left:369.5px;top:115.4px;width:6px;height:1px;background:#c8c8c8"></div>
<div style="position:absolute;left:379.6px;top:113.2px;width:6px;height:6px;box-sizing:border-box;background:#fff;border:0.8px solid #707070"></div>
<div class="t" style="left:387px;top:111.00px;color:#141414;font-size:5.1px;transform:scale(0.9832,1.3);">Stress local disks</div>
<div style="position:absolute;left:368.8px;top:121.2px;width:8px;height:5.3px;background:#3d9be3;border-top:0.7px solid #2a6fb0"></div>
<div style="position:absolute;left:371.5px;top:125.5px;width:5.3px;height:2.3px;background:#3a5a2a"></div>
<div style="position:absolute;left:372.8px;top:126.2px;width:2.8px;height:1.4px;background:#e0b020"></div>
<div style="position:absolute;left:379.6px;top:122.2px;width:6px;height:6px;box-sizing:border-box;background:#fff;border:0.8px solid #707070"></div>
<div class="t" style="left:387px;top:120.00px;color:#141414;font-size:5.1px;transform:scale(0.9408,1.3);">Stress GPU(s)</div>
<div style="position:absolute;left:442.5px;top:76px;width:206.5px;height:53.6px;box-sizing:border-box;background:#fff;border:0.8px solid #b4b4b4"></div>
<div class="t" style="left:446.8px;top:77.90px;color:#141414;font-size:5.1px;transform:scale(1.0809,1.3);">Date &amp; Time</div>
<div class="t" style="left:514px;top:77.90px;color:#141414;font-size:5.1px;">Status</div>
<div style="position:absolute;left:511.2px;top:77px;width:0.6px;height:52px;background:#ececec"></div>
<div style="position:absolute;left:640.2px;top:77px;width:0.6px;height:52px;background:#ececec"></div>
<div style="position:absolute;left:443.5px;top:95.7px;width:204.5px;height:0.5px;background:#f3f3f3"></div>
<div style="position:absolute;left:443.5px;top:104.2px;width:204.5px;height:0.5px;background:#f3f3f3"></div>
<div style="position:absolute;left:443.5px;top:112.5px;width:204.5px;height:0.5px;background:#f3f3f3"></div>
<div style="position:absolute;left:443.5px;top:121px;width:204.5px;height:0.5px;background:#f3f3f3"></div>
<div style="position:absolute;left:373px;top:133.8px;width:37px;height:8.5px;box-sizing:border-box;background:#f0f0f0;border:0.6px solid #d9d9d9;border-bottom:none"></div>
<div class="t" style="left:374.75px;top:134.10px;color:#141414;font-size:5.1px;transform:scale(1.0303,1.3);">Temperatures</div>
<div style="position:absolute;left:410px;top:133.8px;width:36.5px;height:8.5px;box-sizing:border-box;background:#f0f0f0;border:0.6px solid #d9d9d9;border-bottom:none"></div>
<div class="t" style="left:412.5px;top:134.10px;color:#141414;font-size:5.1px;transform:scale(1.0195,1.3);">Cooling Fans</div>
<div style="position:absolute;left:446.5px;top:133.8px;width:24.5px;height:8.5px;box-sizing:border-box;background:#f0f0f0;border:0.6px solid #d9d9d9;border-bottom:none"></div>
<div class="t" style="left:449px;top:134.10px;color:#141414;font-size:5.1px;transform:scale(0.9874,1.3);">Voltages</div>
<div style="position:absolute;left:471px;top:133.8px;width:21.5px;height:8.5px;box-sizing:border-box;background:#f0f0f0;border:0.6px solid #d9d9d9;border-bottom:none"></div>
<div class="t" style="left:474px;top:134.10px;color:#141414;font-size:5.1px;transform:scale(1.0067,1.3);">Clocks</div>
<div style="position:absolute;left:492.5px;top:133.8px;width:21.5px;height:8.5px;box-sizing:border-box;background:#f0f0f0;border:0.6px solid #d9d9d9;border-bottom:none"></div>
<div class="t" style="left:495.6px;top:134.10px;color:#141414;font-size:5.1px;transform:scale(1.0656,1.3);">Unified</div>
<div style="position:absolute;left:370.5px;top:142px;width:338px;height:219.5px;box-sizing:border-box;background:#fff;border:0.7px solid #d9d9d9"></div>
<div style="position:absolute;left:514px;top:132.5px;width:28px;height:10.2px;box-sizing:border-box;background:#fff;border:0.7px solid #d9d9d9;border-bottom:none"></div>
<div class="t" style="left:518.1px;top:133.20px;color:#141414;font-size:5.1px;transform:scale(1.0005,1.3);">Statistics</div>
<div style="position:absolute;left:376px;top:147px;width:328px;height:209.5px;box-sizing:border-box;background:#fff;border:0.8px solid #ababab"></div>
<div class="t" style="left:380px;top:149.10px;color:#141414;font-size:5.1px;">Item</div>
<div class="t" style="left:458.8px;top:149.10px;color:#141414;font-size:5.1px;transform:scale(1.0294,1.3);">Current</div>
<div class="t" style="left:482.5px;top:149.10px;color:#141414;font-size:5.1px;transform:scale(1.1489,1.3);">Minimum</div>
<div class="t" style="left:512.5px;top:149.10px;color:#141414;font-size:5.1px;transform:scale(1.0825,1.3);">Maximum</div>
<div class="t" style="left:548.2px;top:149.10px;color:#141414;font-size:5.1px;transform:scale(1.0058,1.3);">Average</div>
<div style="position:absolute;left:448.7px;top:147.8px;width:0.6px;height:208px;background:#f1f1f1"></div>
<div style="position:absolute;left:479.6px;top:147.8px;width:0.6px;height:208px;background:#f1f1f1"></div>
<div style="position:absolute;left:509.6px;top:147.8px;width:0.6px;height:208px;background:#f1f1f1"></div>
<div style="position:absolute;left:539.6px;top:147.8px;width:0.6px;height:208px;background:#f1f1f1"></div>
<div style="position:absolute;left:570px;top:147.8px;width:0.6px;height:208px;background:#f1f1f1"></div>
<div style="position:absolute;left:377px;top:167.35px;width:317px;height:0.5px;background:#f5f5f5"></div>
<div style="position:absolute;left:377px;top:175.89499999999998px;width:317px;height:0.5px;background:#f5f5f5"></div>
<div style="position:absolute;left:377px;top:184.44px;width:317px;height:0.5px;background:#f5f5f5"></div>
<div style="position:absolute;left:377px;top:192.98499999999999px;width:317px;height:0.5px;background:#f5f5f5"></div>
<div style="position:absolute;left:377px;top:201.53px;width:317px;height:0.5px;background:#f5f5f5"></div>
<div style="position:absolute;left:377px;top:210.075px;width:317px;height:0.5px;background:#f5f5f5"></div>
<div style="position:absolute;left:377px;top:218.61999999999998px;width:317px;height:0.5px;background:#f5f5f5"></div>
<div style="position:absolute;left:377px;top:227.165px;width:317px;height:0.5px;background:#f5f5f5"></div>
<div style="position:absolute;left:377px;top:235.71px;width:317px;height:0.5px;background:#f5f5f5"></div>
<div style="position:absolute;left:377px;top:244.255px;width:317px;height:0.5px;background:#f5f5f5"></div>
<div style="position:absolute;left:377px;top:252.79999999999998px;width:317px;height:0.5px;background:#f5f5f5"></div>
<div style="position:absolute;left:377px;top:261.345px;width:317px;height:0.5px;background:#f5f5f5"></div>
<div style="position:absolute;left:377px;top:269.89px;width:317px;height:0.5px;background:#f5f5f5"></div>
<div style="position:absolute;left:377px;top:278.435px;width:317px;height:0.5px;background:#f5f5f5"></div>
<div style="position:absolute;left:377px;top:286.98px;width:317px;height:0.5px;background:#f5f5f5"></div>
<div style="position:absolute;left:377px;top:295.52500000000003px;width:317px;height:0.5px;background:#f5f5f5"></div>
<div style="position:absolute;left:377px;top:304.07000000000005px;width:317px;height:0.5px;background:#f5f5f5"></div>
<div style="position:absolute;left:377px;top:312.615px;width:317px;height:0.5px;background:#f5f5f5"></div>
<div style="position:absolute;left:377px;top:321.16px;width:317px;height:0.5px;background:#f5f5f5"></div>
<div style="position:absolute;left:377px;top:329.70500000000004px;width:317px;height:0.5px;background:#f5f5f5"></div>
<div style="position:absolute;left:377px;top:338.25px;width:317px;height:0.5px;background:#f5f5f5"></div>
<div style="position:absolute;left:377px;top:346.795px;width:317px;height:0.5px;background:#f5f5f5"></div>
<div style="position:absolute;left:377px;top:355.34000000000003px;width:317px;height:0.5px;background:#f5f5f5"></div>
<svg style="position:absolute;left:386.30px;top:159.95px" width="6.5" height="6.5" viewBox="0 0 7 7"><rect x="0.8" y="0.8" width="5.4" height="5.4" fill="#f3f6f3" stroke="#28603e" stroke-width="1.7"/><rect x="2.7" y="2.7" width="1.6" height="1.6" fill="#cdd8cf"/></svg>
<div class="t" style="left:394.3px;top:158.75px;color:#141414;font-size:5.1px;transform:scale(1.0166,1.3);">CPU Core #1</div>
<div class="t" style="right:243.5px;top:158.75px;color:#141414;font-size:5.1px;text-align:right">28</div>
<div class="t" style="right:213px;top:158.75px;color:#141414;font-size:5.1px;text-align:right">27</div>
<div class="t" style="right:183px;top:158.75px;color:#141414;font-size:5.1px;text-align:right">78</div>
<div class="t" style="right:152.5px;top:158.75px;color:#141414;font-size:5.1px;text-align:right">49.1</div>
<svg style="position:absolute;left:386.30px;top:168.49px" width="6.5" height="6.5" viewBox="0 0 7 7"><rect x="0.8" y="0.8" width="5.4" height="5.4" fill="#f3f6f3" stroke="#28603e" stroke-width="1.7"/><rect x="2.7" y="2.7" width="1.6" height="1.6" fill="#cdd8cf"/></svg>
<div class="t" style="left:394.3px;top:167.29px;color:#141414;font-size:5.1px;transform:scale(1.0166,1.3);">CPU Core #2</div>
<div class="t" style="right:243.5px;top:167.29px;color:#141414;font-size:5.1px;text-align:right">27</div>
<div class="t" style="right:213px;top:167.29px;color:#141414;font-size:5.1px;text-align:right">27</div>
<div class="t" style="right:183px;top:167.29px;color:#141414;font-size:5.1px;text-align:right">82</div>
<div class="t" style="right:152.5px;top:167.29px;color:#141414;font-size:5.1px;text-align:right">50.6</div>
<svg style="position:absolute;left:386.30px;top:177.04px" width="6.5" height="6.5" viewBox="0 0 7 7"><rect x="0.8" y="0.8" width="5.4" height="5.4" fill="#f3f6f3" stroke="#28603e" stroke-width="1.7"/><rect x="2.7" y="2.7" width="1.6" height="1.6" fill="#cdd8cf"/></svg>
<div class="t" style="left:394.3px;top:175.84px;color:#141414;font-size:5.1px;transform:scale(1.0166,1.3);">CPU Core #3</div>
<div class="t" style="right:243.5px;top:175.84px;color:#141414;font-size:5.1px;text-align:right">28</div>
<div class="t" style="right:213px;top:175.84px;color:#141414;font-size:5.1px;text-align:right">27</div>
<div class="t" style="right:183px;top:175.84px;color:#141414;font-size:5.1px;text-align:right">84</div>
<div class="t" style="right:152.5px;top:175.84px;color:#141414;font-size:5.1px;text-align:right">51.6</div>
<svg style="position:absolute;left:386.30px;top:185.58px" width="6.5" height="6.5" viewBox="0 0 7 7"><rect x="0.8" y="0.8" width="5.4" height="5.4" fill="#f3f6f3" stroke="#28603e" stroke-width="1.7"/><rect x="2.7" y="2.7" width="1.6" height="1.6" fill="#cdd8cf"/></svg>
<div class="t" style="left:394.3px;top:184.38px;color:#141414;font-size:5.1px;transform:scale(1.0166,1.3);">CPU Core #4</div>
<div class="t" style="right:243.5px;top:184.38px;color:#141414;font-size:5.1px;text-align:right">26</div>
<div class="t" style="right:213px;top:184.38px;color:#141414;font-size:5.1px;text-align:right">26</div>
<div class="t" style="right:183px;top:184.38px;color:#141414;font-size:5.1px;text-align:right">81</div>
<div class="t" style="right:152.5px;top:184.38px;color:#141414;font-size:5.1px;text-align:right">50.2</div>
<svg style="position:absolute;left:386.30px;top:194.13px" width="6.5" height="6.5" viewBox="0 0 7 7"><rect x="0.8" y="0.8" width="5.4" height="5.4" fill="#f3f6f3" stroke="#28603e" stroke-width="1.7"/><rect x="2.7" y="2.7" width="1.6" height="1.6" fill="#cdd8cf"/></svg>
<div class="t" style="left:394.3px;top:192.93px;color:#141414;font-size:5.1px;transform:scale(1.0166,1.3);">CPU Core #5</div>
<div class="t" style="right:243.5px;top:192.93px;color:#141414;font-size:5.1px;text-align:right">27</div>
<div class="t" style="right:213px;top:192.93px;color:#141414;font-size:5.1px;text-align:right">25</div>
<div class="t" style="right:183px;top:192.93px;color:#141414;font-size:5.1px;text-align:right">80</div>
<div class="t" style="right:152.5px;top:192.93px;color:#141414;font-size:5.1px;text-align:right">48.3</div>
<svg style="position:absolute;left:386.30px;top:202.67px" width="6.5" height="6.5" viewBox="0 0 7 7"><rect x="0.8" y="0.8" width="5.4" height="5.4" fill="#f3f6f3" stroke="#28603e" stroke-width="1.7"/><rect x="2.7" y="2.7" width="1.6" height="1.6" fill="#cdd8cf"/></svg>
<div class="t" style="left:394.3px;top:201.47px;color:#141414;font-size:5.1px;transform:scale(1.0166,1.3);">CPU Core #6</div>
<div class="t" style="right:243.5px;top:201.47px;color:#141414;font-size:5.1px;text-align:right">26</div>
<div class="t" style="right:213px;top:201.47px;color:#141414;font-size:5.1px;text-align:right">26</div>
<div class="t" style="right:183px;top:201.47px;color:#141414;font-size:5.1px;text-align:right">79</div>
<div class="t" style="right:152.5px;top:201.47px;color:#141414;font-size:5.1px;text-align:right">49.0</div>
<svg style="position:absolute;left:386.30px;top:211.22px" width="6.5" height="6.5" viewBox="0 0 7 7"><rect x="0.8" y="0.8" width="5.4" height="5.4" fill="#f3f6f3" stroke="#28603e" stroke-width="1.7"/><rect x="2.7" y="2.7" width="1.6" height="1.6" fill="#cdd8cf"/></svg>
<div class="t" style="left:394.3px;top:210.02px;color:#141414;font-size:5.1px;transform:scale(1.0032,1.3);">CPU</div>
<div class="t" style="right:243.5px;top:210.02px;color:#141414;font-size:5.1px;text-align:right">26</div>
<div class="t" style="right:213px;top:210.02px;color:#141414;font-size:5.1px;text-align:right">24</div>
<div class="t" style="right:183px;top:210.02px;color:#141414;font-size:5.1px;text-align:right">74</div>
<div class="t" style="right:152.5px;top:210.02px;color:#141414;font-size:5.1px;text-align:right">47.7</div>
<div style="position:absolute;left:387px;top:220px;width:6px;height:7px;background:#505050"></div>
<div style="position:absolute;left:389px;top:221px;width:2px;height:5px;background:#6e6e6e"></div>
<div style="position:absolute;left:389px;top:220px;width:2px;height:1px;background:#bdbdbd"></div>
<div class="t" style="left:394.3px;top:218.56px;color:#141414;font-size:5.1px;transform:scale(1.0496,1.3);">PCH</div>
<div class="t" style="right:243.5px;top:218.56px;color:#141414;font-size:5.1px;text-align:right">39</div>
<div class="t" style="right:213px;top:218.56px;color:#141414;font-size:5.1px;text-align:right">39</div>
<div class="t" style="right:183px;top:218.56px;color:#141414;font-size:5.1px;text-align:right">39</div>
<div class="t" style="right:152.5px;top:218.56px;color:#141414;font-size:5.1px;text-align:right">39.0</div>
<div style="position:absolute;left:386px;top:228px;width:7px;height:7px;background:#3c8f4c"></div>
<div style="position:absolute;left:387px;top:229px;width:2px;height:3px;background:#b8dcbf"></div>
<div style="position:absolute;left:390px;top:229px;width:2px;height:3px;background:#f4fbf5"></div>
<div style="position:absolute;left:387px;top:233px;width:5px;height:1px;background:#8fc79a"></div>
<div class="t" style="left:394.3px;top:227.11px;color:#141414;font-size:5.1px;transform:scale(1.1094,1.3);">Motherboard</div>
<div class="t" style="right:243.5px;top:227.11px;color:#141414;font-size:5.1px;text-align:right">26</div>
<div class="t" style="right:213px;top:227.11px;color:#141414;font-size:5.1px;text-align:right">26</div>
<div class="t" style="right:183px;top:227.11px;color:#141414;font-size:5.1px;text-align:right">26</div>
<div class="t" style="right:152.5px;top:227.11px;color:#141414;font-size:5.1px;text-align:right">26.0</div>
<svg style="position:absolute;left:379.0px;top:236.155px" width="8" height="8" viewBox="0 0 8 8"><path d="M0.3 0.3H3L4 2L5 0.3H7.5V3L5.8 4L7.5 5V7.5H5L4 5.8L3 7.5H0.3V5L2 4L0.3 3Z" fill="#1b86cc"/><circle cx="4" cy="4" r="1.1" fill="#7cc3ee"/></svg>
<div class="t" style="left:387.0px;top:235.66px;color:#141414;font-size:5.1px;transform:scale(1.0528,1.3);">Cooling Fans</div>
<svg style="position:absolute;left:386.30px;top:245.40px" width="6.5" height="6.5" viewBox="0 0 7 7"><rect x="0.8" y="0.8" width="5.4" height="5.4" fill="#f3f6f3" stroke="#28603e" stroke-width="1.7"/><rect x="2.7" y="2.7" width="1.6" height="1.6" fill="#cdd8cf"/></svg>
<div class="t" style="left:394.3px;top:244.20px;color:#141414;font-size:5.1px;transform:scale(1.0032,1.3);">CPU</div>
<div class="t" style="right:243.5px;top:244.20px;color:#141414;font-size:5.1px;text-align:right">956</div>
<div class="t" style="right:213px;top:244.20px;color:#141414;font-size:5.1px;text-align:right">903</div>
<div class="t" style="right:183px;top:244.20px;color:#141414;font-size:5.1px;text-align:right">1443</div>
<div class="t" style="right:152.5px;top:244.20px;color:#141414;font-size:5.1px;text-align:right">1191</div>
<svg style="position:absolute;left:379.00px;top:253.94px" width="7" height="7" viewBox="0 0 7 7"><circle cx="3.5" cy="3.5" r="3" fill="#f08a3a" stroke="#c4a894" stroke-width="0.9"/><path d="M3.5 1.6V5.4M1.6 3.5H5.4" stroke="#fde0c8" stroke-width="0.9"/></svg>
<div class="t" style="left:387.0px;top:252.75px;color:#141414;font-size:5.1px;transform:scale(1.0411,1.3);">Voltages</div>
<svg style="position:absolute;left:386.30px;top:262.49px" width="6.5" height="6.5" viewBox="0 0 7 7"><rect x="0.8" y="0.8" width="5.4" height="5.4" fill="#f3f6f3" stroke="#28603e" stroke-width="1.7"/><rect x="2.7" y="2.7" width="1.6" height="1.6" fill="#cdd8cf"/></svg>
<div class="t" style="left:394.3px;top:261.29px;color:#141414;font-size:5.1px;transform:scale(0.9699,1.3);">CPU VID</div>
<div class="t" style="right:243.5px;top:261.29px;color:#141414;font-size:5.1px;text-align:right">0.808</div>
<div class="t" style="right:213px;top:261.29px;color:#141414;font-size:5.1px;text-align:right">0.804</div>
<div class="t" style="right:183px;top:261.29px;color:#141414;font-size:5.1px;text-align:right">1.135</div>
<div class="t" style="right:152.5px;top:261.29px;color:#141414;font-size:5.1px;text-align:right">0.951</div>
<svg style="position:absolute;left:386.30px;top:271.03px" width="6.5" height="6.5" viewBox="0 0 7 7"><rect x="0.8" y="0.8" width="5.4" height="5.4" fill="#f3f6f3" stroke="#28603e" stroke-width="1.7"/><rect x="2.7" y="2.7" width="1.6" height="1.6" fill="#cdd8cf"/></svg>
<div class="t" style="left:394.3px;top:269.83px;color:#141414;font-size:5.1px;transform:scale(1.0035,1.3);">CPU Core</div>
<div class="t" style="right:243.5px;top:269.83px;color:#141414;font-size:5.1px;text-align:right">1.072</div>
<div class="t" style="right:213px;top:269.83px;color:#141414;font-size:5.1px;text-align:right">1.056</div>
<div class="t" style="right:183px;top:269.83px;color:#141414;font-size:5.1px;text-align:right">1.360</div>
<div class="t" style="right:152.5px;top:269.83px;color:#141414;font-size:5.1px;text-align:right">1.197</div>
<svg style="position:absolute;left:386.30px;top:279.58px" width="6.5" height="6.5" viewBox="0 0 7 7"><rect x="0.8" y="0.8" width="5.4" height="5.4" fill="#f3f6f3" stroke="#28603e" stroke-width="1.7"/><rect x="2.7" y="2.7" width="1.6" height="1.6" fill="#cdd8cf"/></svg>
<div class="t" style="left:394.3px;top:278.38px;color:#141414;font-size:5.1px;transform:scale(0.9789,1.3);">VCCIO</div>
<div class="t" style="right:243.5px;top:278.38px;color:#141414;font-size:5.1px;text-align:right">0.968</div>
<div class="t" style="right:213px;top:278.38px;color:#141414;font-size:5.1px;text-align:right">0.960</div>
<div class="t" style="right:183px;top:278.38px;color:#141414;font-size:5.1px;text-align:right">0.968</div>
<div class="t" style="right:152.5px;top:278.38px;color:#141414;font-size:5.1px;text-align:right">0.961</div>
<svg style="position:absolute;left:386.30px;top:288.12px" width="6.5" height="6.5" viewBox="0 0 7 7"><rect x="0.8" y="0.8" width="5.4" height="5.4" fill="#f3f6f3" stroke="#28603e" stroke-width="1.7"/><rect x="2.7" y="2.7" width="1.6" height="1.6" fill="#cdd8cf"/></svg>
<div class="t" style="left:394.3px;top:286.93px;color:#141414;font-size:5.1px;transform:scale(0.9566,1.3);">VCCSA</div>
<div class="t" style="right:243.5px;top:286.93px;color:#141414;font-size:5.1px;text-align:right">1.072</div>
<div class="t" style="right:213px;top:286.93px;color:#141414;font-size:5.1px;text-align:right">1.072</div>
<div class="t" style="right:183px;top:286.93px;color:#141414;font-size:5.1px;text-align:right">1.072</div>
<div class="t" style="right:152.5px;top:286.93px;color:#141414;font-size:5.1px;text-align:right">1.072</div>
<svg style="position:absolute;left:386.30px;top:296.67px" width="7" height="7" viewBox="0 0 7 7"><circle cx="3.5" cy="3.5" r="3" fill="#f08a3a" stroke="#c4a894" stroke-width="0.9"/><path d="M3.5 1.6V5.4M1.6 3.5H5.4" stroke="#fde0c8" stroke-width="0.9"/></svg>
<div class="t" style="left:394.3px;top:295.47px;color:#141414;font-size:5.1px;transform:scale(1.0635,1.3);">+5 V</div>
<div class="t" style="right:243.5px;top:295.47px;color:#141414;font-size:5.1px;text-align:right">5.040</div>
<div class="t" style="right:213px;top:295.47px;color:#141414;font-size:5.1px;text-align:right">5.000</div>
<div class="t" style="right:183px;top:295.47px;color:#141414;font-size:5.1px;text-align:right">5.040</div>
<div class="t" style="right:152.5px;top:295.47px;color:#141414;font-size:5.1px;text-align:right">5.022</div>
<svg style="position:absolute;left:386.30px;top:305.21px" width="7" height="7" viewBox="0 0 7 7"><circle cx="3.5" cy="3.5" r="3" fill="#f08a3a" stroke="#c4a894" stroke-width="0.9"/><path d="M3.5 1.6V5.4M1.6 3.5H5.4" stroke="#fde0c8" stroke-width="0.9"/></svg>
<div class="t" style="left:394.3px;top:304.01px;color:#141414;font-size:5.1px;transform:scale(1.0246,1.3);">+12 V</div>
<div class="t" style="right:243.5px;top:304.01px;color:#141414;font-size:5.1px;text-align:right">12.192</div>
<div class="t" style="right:213px;top:304.01px;color:#141414;font-size:5.1px;text-align:right">12.192</div>
<div class="t" style="right:183px;top:304.01px;color:#141414;font-size:5.1px;text-align:right">12.288</div>
<div class="t" style="right:152.5px;top:304.01px;color:#141414;font-size:5.1px;text-align:right">12.241</div>
<div style="position:absolute;left:386px;top:315px;width:7px;height:4px;background:#2a6a3e"></div>
<div style="position:absolute;left:387px;top:316px;width:5px;height:2px;background:#3f7f52"></div>
<div class="t" style="left:394.3px;top:312.56px;color:#141414;font-size:5.1px;transform:scale(1.1071,1.3);">DIMM</div>
<div class="t" style="right:243.5px;top:312.56px;color:#141414;font-size:5.1px;text-align:right">1.344</div>
<div class="t" style="right:213px;top:312.56px;color:#141414;font-size:5.1px;text-align:right">1.344</div>
<div class="t" style="right:183px;top:312.56px;color:#141414;font-size:5.1px;text-align:right">1.360</div>
<div class="t" style="right:152.5px;top:312.56px;color:#141414;font-size:5.1px;text-align:right">1.345</div>
<div style="position:absolute;left:379px;top:322px;width:6px;height:7px;background:#505050"></div>
<div style="position:absolute;left:381px;top:323px;width:2px;height:5px;background:#6e6e6e"></div>
<div style="position:absolute;left:381px;top:322px;width:2px;height:1px;background:#bdbdbd"></div>
<div class="t" style="left:387.0px;top:321.11px;color:#141414;font-size:5.1px;transform:scale(1.0525,1.3);">Clocks</div>
<svg style="position:absolute;left:386.30px;top:330.85px" width="6.5" height="6.5" viewBox="0 0 7 7"><rect x="0.8" y="0.8" width="5.4" height="5.4" fill="#f3f6f3" stroke="#28603e" stroke-width="1.7"/><rect x="2.7" y="2.7" width="1.6" height="1.6" fill="#cdd8cf"/></svg>
<div class="t" style="left:394.3px;top:329.65px;color:#141414;font-size:5.1px;transform:scale(1.0252,1.3);">CPU Clock</div>
<div class="t" style="right:243.5px;top:329.65px;color:#141414;font-size:5.1px;text-align:right">800</div>
<div class="t" style="right:213px;top:329.65px;color:#141414;font-size:5.1px;text-align:right">799</div>
<div class="t" style="right:183px;top:329.65px;color:#141414;font-size:5.1px;text-align:right">5304</div>
<div class="t" style="right:152.5px;top:329.65px;color:#141414;font-size:5.1px;text-align:right">2826.2</div>
<div style="position:absolute;left:387px;top:339px;width:6px;height:7px;background:#505050"></div>
<div style="position:absolute;left:389px;top:340px;width:2px;height:5px;background:#6e6e6e"></div>
<div style="position:absolute;left:389px;top:339px;width:2px;height:1px;background:#bdbdbd"></div>
<div class="t" style="left:394.3px;top:338.19px;color:#141414;font-size:5.1px;transform:scale(1.0713,1.3);">North Bridge Clock</div>
<div class="t" style="right:243.5px;top:338.19px;color:#141414;font-size:5.1px;text-align:right">800</div>
<div class="t" style="right:213px;top:338.19px;color:#141414;font-size:5.1px;text-align:right">799</div>
<div class="t" style="right:183px;top:338.19px;color:#141414;font-size:5.1px;text-align:right">5004</div>
<div class="t" style="right:152.5px;top:338.19px;color:#141414;font-size:5.1px;text-align:right">2693.9</div>
<div style="position:absolute;left:386px;top:349px;width:7px;height:4px;background:#2a6a3e"></div>
<div style="position:absolute;left:387px;top:350px;width:5px;height:2px;background:#3f7f52"></div>
<div class="t" style="left:394.3px;top:346.74px;color:#141414;font-size:5.1px;transform:scale(1.0917,1.3);">Memory Clock</div>
<div class="t" style="right:243.5px;top:346.74px;color:#141414;font-size:5.1px;text-align:right">1600</div>
<div class="t" style="right:213px;top:346.74px;color:#141414;font-size:5.1px;text-align:right">1598</div>
<div class="t" style="right:183px;top:346.74px;color:#141414;font-size:5.1px;text-align:right">1601</div>
<div class="t" style="right:152.5px;top:346.74px;color:#141414;font-size:5.1px;text-align:right">1599.9</div>
<div style="position:absolute;left:695.5px;top:148px;width:7.5px;height:208px;background:#f8f8f8"></div>
<div style="position:absolute;left:696px;top:164px;width:6.5px;height:183.5px;background:#c9c9c9"></div>
<svg style="position:absolute;left:697px;top:150.5px" width="5" height="4" viewBox="0 0 5 4"><path d="M0.6 3L2.5 1L4.4 3" fill="none" stroke="#444" stroke-width="1"/></svg>
<svg style="position:absolute;left:697px;top:350px" width="5" height="4" viewBox="0 0 5 4"><path d="M0.6 1L2.5 3L4.4 1" fill="none" stroke="#444" stroke-width="1"/></svg>
<div class="t" style="left:371px;top:369.70px;color:#222;font-size:5.1px;transform:scale(1.0155,1.3);">Remaining Battery:</div>
<div style="position:absolute;left:421px;top:369px;width:36px;height:10.5px;background:#000"></div>
<div class="t" style="left:427.5px;top:369.70px;color:#22e022;font-size:5.1px;font-weight:bold;transform:scale(1.0426,1.3);">No battery</div>
<div class="t" style="left:467px;top:369.70px;color:#222;font-size:5.1px;">Test Started:</div>
<div style="position:absolute;left:501px;top:369px;width:63.5px;height:10.5px;background:#000"></div>
<div class="t" style="left:575px;top:369.70px;color:#222;font-size:5.1px;">Elapsed Time:</div>
<div style="position:absolute;left:612.5px;top:369px;width:36.5px;height:10.5px;background:#000"></div>
<div style="position:absolute;left:364.3px;top:389.8px;width:32.39999999999998px;height:9px;box-sizing:border-box;background:#e3e3e3;border:0.7px solid #c8c8c8"></div>
<div class="t" style="left:364.3px;width:32.39999999999998px;top:389.80px;text-align:center;color:#111;font-size:5.1px">Start</div>
<div style="position:absolute;left:400px;top:389.8px;width:33px;height:9px;box-sizing:border-box;background:#cccccc;border:0.7px solid #bfbfbf"></div>
<div class="t" style="left:400px;width:33px;top:389.80px;text-align:center;color:#9a9a9a;font-size:5.1px">Stop</div>
<div style="position:absolute;left:447px;top:389.8px;width:33px;height:9px;box-sizing:border-box;background:#e3e6e9;border:1px solid #3a86d6"></div>
<div class="t" style="left:447px;width:33px;top:389.80px;text-align:center;color:#111;font-size:5.1px">Clear</div>
<div style="position:absolute;left:484px;top:389.8px;width:33px;height:9px;box-sizing:border-box;background:#e3e3e3;border:0.7px solid #c8c8c8"></div>
<div class="t" style="left:484px;width:33px;top:389.80px;text-align:center;color:#111;font-size:5.1px">Save</div>
<div style="position:absolute;left:531px;top:389.8px;width:33px;height:9px;box-sizing:border-box;background:#e3e3e3;border:0.7px solid #c8c8c8"></div>
<div class="t" style="left:531px;width:33px;top:389.80px;text-align:center;color:#111;font-size:5.1px">CPUID</div>
<div style="position:absolute;left:567px;top:389.8px;width:32.5px;height:9px;box-sizing:border-box;background:#e3e3e3;border:0.7px solid #c8c8c8"></div>
<div class="t" style="left:567px;width:32.5px;top:389.80px;text-align:center;color:#111;font-size:5.1px">Preferences</div>
<div style="position:absolute;left:683.3px;top:389.8px;width:32.60000000000002px;height:9px;box-sizing:border-box;background:#e3e3e3;border:0.7px solid #c8c8c8"></div>
<div class="t" style="left:683.3px;width:32.60000000000002px;top:389.80px;text-align:center;color:#111;font-size:5.1px">Close</div>
</body></html>
